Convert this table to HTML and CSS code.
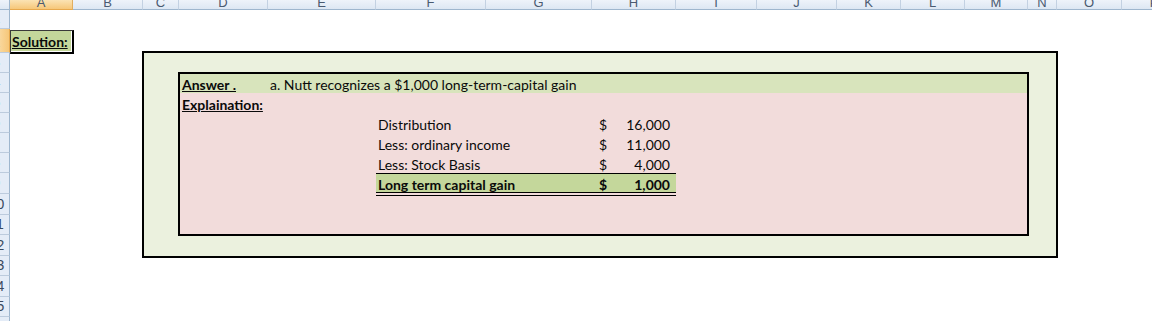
FILE: index.html
```html
<!DOCTYPE html>
<html>
<head>
<meta charset="utf-8">
<title>Solution</title>
<link rel="stylesheet" href="styles.css">
</head>
<body>
<div class="sheet">
  <div class="ch corner"></div>
  <div class="ch sel">A</div>
  <div class="ch">B</div>
  <div class="ch">C</div>
  <div class="ch">D</div>
  <div class="ch">E</div>
  <div class="ch">F</div>
  <div class="ch">G</div>
  <div class="ch">H</div>
  <div class="ch">I</div>
  <div class="ch">J</div>
  <div class="ch">K</div>
  <div class="ch">L</div>
  <div class="ch">M</div>
  <div class="ch">N</div>
  <div class="ch">O</div>
  <div class="ch">P</div>

  <div class="rh"><span>1</span></div>
  <div class="rh sel"><span>2</span></div>
  <div class="rh"><span>3</span></div>
  <div class="rh"><span>4</span></div>
  <div class="rh"><span>5</span></div>
  <div class="rh"><span>6</span></div>
  <div class="rh"><span>7</span></div>
  <div class="rh"><span>8</span></div>
  <div class="rh"><span>9</span></div>
  <div class="rh"><span>10</span></div>
  <div class="rh"><span>11</span></div>
  <div class="rh"><span>12</span></div>
  <div class="rh"><span>13</span></div>
  <div class="rh"><span>14</span></div>
  <div class="rh"><span>15</span></div>
  <div class="rh"><span>16</span></div>

  <div class="cell solution"><span class="u b">Solution:</span></div>

  <div class="frame"></div>
  <div class="panel"></div>
  <div class="answer-band"></div>

  <div class="cell answer-label"><span class="u b">Answer .</span></div>
  <div class="cell answer-text">a. Nutt recognizes a $1,000 long-term-capital gain</div>
  <div class="cell expl"><span class="u b">Explaination:</span></div>

  <div class="cell lbl r6">Distribution</div>
  <div class="cell amt r6"><span>$</span><span>16,000</span></div>
  <div class="cell lbl r7">Less: ordinary income</div>
  <div class="cell amt r7"><span>$</span><span>11,000</span></div>
  <div class="cell lbl r8">Less: Stock Basis</div>
  <div class="cell amt r8"><span>$</span><span>4,000</span></div>

  <div class="total-band"></div>
  <div class="cell lbl r9 b">Long term capital gain</div>
  <div class="cell amt r9 b"><span>$</span><span>1,000</span></div>
</div>
</body>
</html>
```

FILE: styles.css
```css
html, body {
  margin: 0;
  padding: 0;
  background: #ffffff;
  overflow: hidden;
}

body {
  width: 1152px;
  height: 321px;
  font-family: "Lato", "Liberation Sans", sans-serif;
  font-size: 14px;
  color: #0a0a0a;
}

.sheet {
  display: grid;
  grid-template-columns: 10px 63px 70px 36px 89px 108px 110px 106px 84px 81px 80px 64px 64px 63px 29px 65px 65px;
  grid-template-rows: 10px 19px 24px 20px 20px 20px 20px 20px 20px 21px 21px 20px 21px 20px 21px 20px 20px;
}

/* column headers */
.ch {
  grid-row: 1;
  display: flex;
  align-items: flex-end;
  justify-content: center;
  overflow: hidden;
  box-sizing: border-box;
  background: linear-gradient(#eef3fa, #dde7f3);
  border-right: 1px solid #c3d1e2;
  border-bottom: 1px solid #9eb6ce;
  font-family: "Liberation Sans", sans-serif;
  font-size: 13px;
  line-height: 12px;
  color: #4a5a70;
}
.ch.corner {
  border-right: 1px solid #9eb6ce;
}
.ch.sel {
  background: linear-gradient(#fbe3b4, #f6c779);
  border-right-color: #e2ae5f;
  border-bottom-color: #e7a94e;
}

/* row headers */
.rh {
  grid-column: 1;
  display: flex;
  justify-content: flex-end;
  align-items: flex-end;
  overflow: hidden;
  box-sizing: border-box;
  background: #e4ecf7;
  border-right: 1px solid #9eb6ce;
  border-bottom: 1px solid #bccbdd;
  font-family: "Liberation Sans", sans-serif;
  font-size: 14px;
  line-height: 16px;
  color: #3b4a5e;
  padding-bottom: 2px;
}
.rh span {
  flex: none;
  width: 25px;
  text-align: center;
}
.rh.sel {
  background: linear-gradient(90deg, #f9d79c, #f6c779);
  border-right-color: #e7a94e;
}

/* cells */
.cell {
  display: flex;
  align-items: flex-end;
  white-space: nowrap;
  line-height: 16px;
  padding: 0 2px 0 2px;
  min-width: 0;
}
.b { font-weight: bold; }
.u { text-decoration: underline; }

.solution {
  grid-column: 2;
  grid-row: 3;
  box-sizing: border-box;
  margin-top: 1px;
  background: #c4d79b;
  border-top: 1px solid #3a3a3a;
  border-left: 1px solid #3a3a3a;
  border-right: 2px solid #000;
  border-bottom: 2px solid #000;
  box-shadow: inset -1px -1px 0 #ffffff;
  padding: 0 0 2px 1px;
  margin-bottom: -1px;
  margin-right: -1px;
}

.frame {
  grid-column: 4 / 16;
  grid-row: 4 / 14;
  margin: -2px -1px -2px -1px;
  background: #ebf1de;
  border: 2px solid #000;
}

.panel {
  grid-column: 5 / 15;
  grid-row: 5 / 13;
  margin: -1px -1px -1px -1px;
  background: #f2dcdb;
  border: 2px solid #000;
}

.answer-band {
  grid-column: 5 / 15;
  grid-row: 5;
  margin: 1px 1px 0 1px;
  background: #d8e4bc;
}

.answer-label { grid-column: 5; grid-row: 5; padding-left: 3px; }
.answer-text { grid-column: 6 / 15; grid-row: 5; }
.expl { grid-column: 5; grid-row: 6; padding-left: 3px; }

.lbl { grid-column: 7; }
.amt {
  grid-column: 9;
  justify-content: space-between;
  padding: 0 6px 0 7px;
}
.r6 { grid-row: 7; }
.r7 { grid-row: 8; }
.r8 { grid-row: 9; }
.r9 { grid-row: 10; }

.total-band {
  grid-column: 7 / 10;
  grid-row: 10;
  margin-bottom: -2px;
  background: #c4d79b;
  border-top: 1px solid #000;
  border-bottom: 4px double #000;
  background-clip: padding-box;
}
.lbl.r9, .amt.r9 {
  padding-bottom: 1px;
}
```
